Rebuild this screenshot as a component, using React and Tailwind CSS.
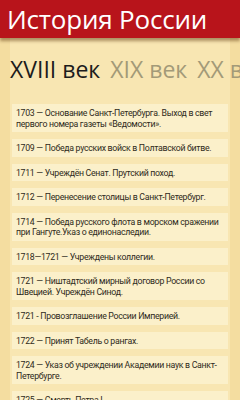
const events = [
    '1703 — Основание Санкт-Петербурга. Выход в свет первого номера газеты «Ведомости».',
    '1709 — Победа русских войск в Полтавской битве.',
    '1711 — Учреждён Сенат. Прутский поход.',
    '1712 — Перенесение столицы в Санкт-Петербург.',
    '1714 — Победа русского флота в морском сражении при Гангуте.Указ о единонаследии.',
    '1718—1721 — Учреждены коллегии.',
    '1721 — Ништадтский мирный договор России со Швецией. Учреждён Синод.',
    '1721 - Провозглашение России Империей.',
    '1722 — Принят Табель о рангах.',
    '1724 — Указ об учреждении Академии наук в Санкт-Петербурге.',
    '1725 — Смерть Петра I.',
];

const App = () => {
    return (
        <div className="w-[240px] h-[400px] overflow-hidden bg-[#f4dda0] flex flex-col" style={{ fontFamily: '"Open Sans", "Noto Sans", sans-serif' }}>
            <header className="h-[38px] shrink-0 bg-[#b8141b] text-white shadow-[0_3px_3px_rgba(80,40,0,0.45)] z-10 flex items-center pl-[7px]">
                <h1 className="text-[26px] leading-none tracking-[-0.2px] whitespace-nowrap">История России</h1>
            </header>

            <div className="flex-1 mx-[10px] bg-[#f8e6b2]">
                <div className="flex gap-[10px] pt-[20px] h-[66px] mr-[-10px] whitespace-nowrap text-[23px] leading-none">
                    <span className="text-[#1c1c1c]">XVIII век</span>
                    <span className="text-[#a39a78]">XIX век</span>
                    <span className="text-[#a39a78]">XX век</span>
                </div>

                <div className="flex flex-col gap-[7px] px-[2px]">
                    {events.map((text, i) => (
                        <div key={i} className="bg-[#fbf0ca] px-[4px] pt-[4px] pb-[3px] text-[8.75px] leading-[10.5px] tracking-[-0.3px] text-[#2e2a20]" style={{ fontFamily: 'Roboto, "Liberation Sans", sans-serif' }}>
                            {text}
                        </div>
                    ))}
                </div>
            </div>
        </div>
    );
};

export default App;
